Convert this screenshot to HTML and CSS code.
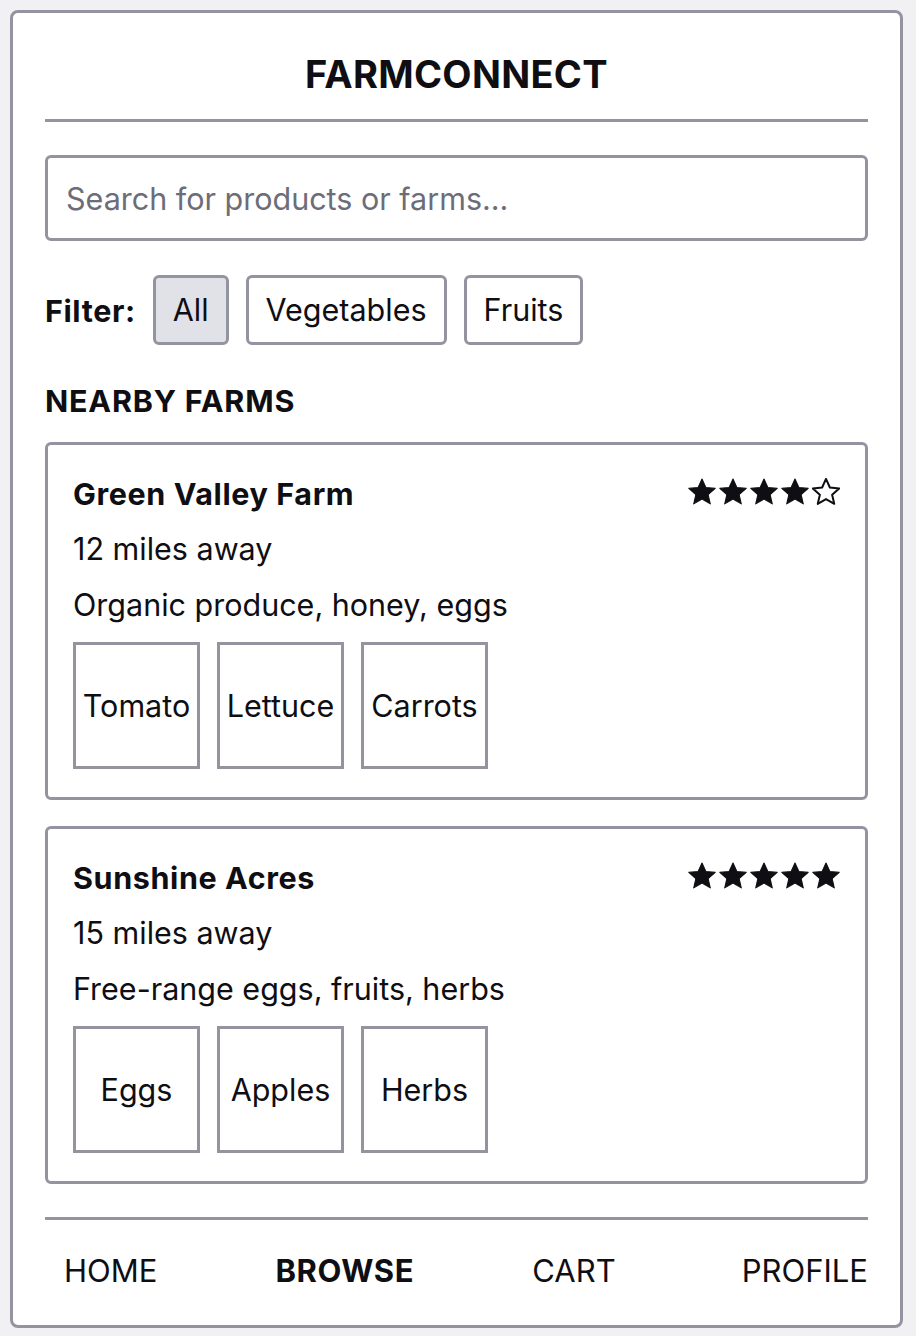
FILE: index.html
```html
<!DOCTYPE html>
<html lang="en">
<head>
  <meta charset="UTF-8">
  <meta name="viewport" content="width=device-width, initial-scale=1.0">
  <title>FarmConnect</title>
  <link rel="stylesheet" href="styles.css">
</head>
<body>
  <div class="app">
    <header class="app-header">
      <h1>FARMCONNECT</h1>
    </header>

    <input class="search" type="text" placeholder="Search for products or farms...">

    <div class="filters">
      <span class="filter-label">Filter:</span>
      <button class="chip active">All</button>
      <button class="chip">Vegetables</button>
      <button class="chip">Fruits</button>
    </div>

    <h2 class="section-title">NEARBY FARMS</h2>

    <div class="farm-card">
      <div class="farm-head">
        <h3 class="farm-name">Green Valley Farm</h3>
        <div class="stars">
          <svg class="star" viewBox="1.5 1.5 21 21"><path d="M12 2.2l2.9 6.4 7 .7-5.3 4.7 1.6 6.9L12 17.3l-6.2 3.6 1.6-6.9-5.3-4.7 7-.7z"/></svg>
          <svg class="star" viewBox="1.5 1.5 21 21"><path d="M12 2.2l2.9 6.4 7 .7-5.3 4.7 1.6 6.9L12 17.3l-6.2 3.6 1.6-6.9-5.3-4.7 7-.7z"/></svg>
          <svg class="star" viewBox="1.5 1.5 21 21"><path d="M12 2.2l2.9 6.4 7 .7-5.3 4.7 1.6 6.9L12 17.3l-6.2 3.6 1.6-6.9-5.3-4.7 7-.7z"/></svg>
          <svg class="star" viewBox="1.5 1.5 21 21"><path d="M12 2.2l2.9 6.4 7 .7-5.3 4.7 1.6 6.9L12 17.3l-6.2 3.6 1.6-6.9-5.3-4.7 7-.7z"/></svg>
          <svg class="star empty" viewBox="1.5 1.5 21 21"><path d="M12 2.2l2.9 6.4 7 .7-5.3 4.7 1.6 6.9L12 17.3l-6.2 3.6 1.6-6.9-5.3-4.7 7-.7z"/></svg>
        </div>
      </div>
      <p class="farm-line">12 miles away</p>
      <p class="farm-line">Organic produce, honey, eggs</p>
      <div class="products">
        <div class="product">Tomato</div>
        <div class="product">Lettuce</div>
        <div class="product">Carrots</div>
      </div>
    </div>

    <div class="farm-card">
      <div class="farm-head">
        <h3 class="farm-name">Sunshine Acres</h3>
        <div class="stars">
          <svg class="star" viewBox="1.5 1.5 21 21"><path d="M12 2.2l2.9 6.4 7 .7-5.3 4.7 1.6 6.9L12 17.3l-6.2 3.6 1.6-6.9-5.3-4.7 7-.7z"/></svg>
          <svg class="star" viewBox="1.5 1.5 21 21"><path d="M12 2.2l2.9 6.4 7 .7-5.3 4.7 1.6 6.9L12 17.3l-6.2 3.6 1.6-6.9-5.3-4.7 7-.7z"/></svg>
          <svg class="star" viewBox="1.5 1.5 21 21"><path d="M12 2.2l2.9 6.4 7 .7-5.3 4.7 1.6 6.9L12 17.3l-6.2 3.6 1.6-6.9-5.3-4.7 7-.7z"/></svg>
          <svg class="star" viewBox="1.5 1.5 21 21"><path d="M12 2.2l2.9 6.4 7 .7-5.3 4.7 1.6 6.9L12 17.3l-6.2 3.6 1.6-6.9-5.3-4.7 7-.7z"/></svg>
          <svg class="star" viewBox="1.5 1.5 21 21"><path d="M12 2.2l2.9 6.4 7 .7-5.3 4.7 1.6 6.9L12 17.3l-6.2 3.6 1.6-6.9-5.3-4.7 7-.7z"/></svg>
        </div>
      </div>
      <p class="farm-line">15 miles away</p>
      <p class="farm-line">Free-range eggs, fruits, herbs</p>
      <div class="products">
        <div class="product">Eggs</div>
        <div class="product">Apples</div>
        <div class="product">Herbs</div>
      </div>
    </div>

    <nav class="bottom-nav">
      <a href="#">HOME</a>
      <a href="#" class="current">BROWSE</a>
      <a href="#">CART</a>
      <a href="#">PROFILE</a>
    </nav>
  </div>
</body>
</html>
```

FILE: styles.css
```css
* {
  margin: 0;
  padding: 0;
  box-sizing: border-box;
  font-family: Inter, "Noto Sans", sans-serif;
}

body {
  background: #f1f1f3;
  color: #0e0e13;
}

.app {
  margin: 10px;
  width: 893px;
  height: 1318px;
  background: #fff;
  border: 3px solid #9394a0;
  border-radius: 8px;
  padding: 32px;
  display: flex;
  flex-direction: column;
}

.app-header {
  padding: 6px 0 22px;
  border-bottom: 3px solid #9394a0;
  text-align: center;
}

.app-header h1 {
  font-size: 38px;
  font-weight: 700;
  line-height: 46px;
  letter-spacing: 0.3px;
}

.search {
  margin-top: 33px;
  height: 86px;
  width: 100%;
  border: 3px solid #9394a0;
  border-radius: 6px;
  padding: 0 18px;
  font-size: 30.5px;
  color: #0e0e13;
  outline: none;
}

.search::placeholder {
  color: #6c6d79;
}

.filters {
  margin-top: 34px;
  display: flex;
  align-items: center;
  gap: 17px;
}

.filter-label {
  font-size: 30.5px;
  font-weight: 700;
  letter-spacing: 0.6px;
}

.chip {
  font-size: 30.5px;
  line-height: 34px;
  padding: 15px 17px;
  background: #fff;
  color: #0e0e13;
  border: 3px solid #9394a0;
  border-radius: 6px;
}

.chip.active {
  background: #e1e2e7;
}

.section-title {
  margin-top: 38px;
  font-size: 30.5px;
  font-weight: 700;
  line-height: 36px;
  letter-spacing: 0.8px;
}

.farm-card {
  margin-top: 23px;
  border: 3px solid #9394a0;
  border-radius: 6px;
  padding: 27px 25px 28px;
}

.farm-card + .farm-card {
  margin-top: 26px;
}

.farm-head {
  display: flex;
  justify-content: space-between;
  align-items: center;
  height: 42px;
}

.farm-name {
  font-size: 30.5px;
  font-weight: 700;
  letter-spacing: 0.6px;
}

.stars {
  display: flex;
  gap: 3px;
  margin-top: -2px;
}

.star {
  width: 28px;
  height: 28px;
  fill: #0e0e13;
  stroke: #0e0e13;
  stroke-width: 0.8;
  stroke-linejoin: round;
}

.star.empty {
  fill: none;
  stroke-width: 1.5;
}

.farm-line {
  margin-top: 14px;
  font-size: 30.5px;
  line-height: 42px;
}

.products {
  margin-top: 16px;
  display: flex;
  gap: 17px;
}

.product {
  width: 127px;
  height: 127px;
  border: 3px solid #9394a0;
  display: flex;
  align-items: center;
  justify-content: center;
  font-size: 30.5px;
}

.bottom-nav {
  margin-top: auto;
  border-top: 3px solid #9394a0;
  padding: 28px 0 0 19px;
  display: flex;
  justify-content: space-between;
}

.bottom-nav a {
  font-size: 31px;
  line-height: 45px;
  color: #0e0e13;
  text-decoration: none;
}

.bottom-nav a.current {
  font-weight: 700;
  letter-spacing: 0.6px;
}

.bottom-nav a:nth-child(3) {
  margin-right: 8px;
}
```
